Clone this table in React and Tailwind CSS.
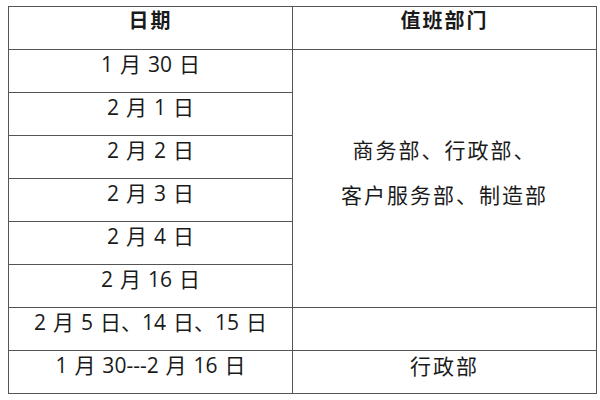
export default function App() {
  const sans = { fontFamily: '"Open Sans", "Noto Sans CJK SC", sans-serif' }
  const rows = ['1 月 30 日', '2 月 1 日', '2 月 2 日', '2 月 3 日', '2 月 4 日', '2 月 16 日']

  return (
    <div className="w-[600px] h-[400px] bg-white pt-[6px] pl-[8px] text-[#1a1a1a]">
      <table className="table-fixed border-collapse w-[588px]" style={sans}>
        <colgroup>
          <col className="w-[284px]" />
          <col className="w-[304px]" />
        </colgroup>
        <tbody>
          <tr className="h-[43px]">
            <td className="border border-[#555] align-top pt-[2px] text-center text-[20px] leading-[24px] font-bold tracking-[2px]">日期</td>
            <td className="border border-[#555] align-top pt-[2px] text-center text-[20px] leading-[24px] font-bold tracking-[2px]">值班部门</td>
          </tr>
          {rows.map((r, i) => (
            <tr key={r} className="h-[43px]">
              <td className="border border-[#555] align-top pt-[2px] text-center text-[21px] leading-[24px] [word-spacing:1.5px]">{r}</td>
              {i === 0 && (
                <td rowSpan={6} className="border border-[#555] align-top pt-[77px] text-center text-[21px] leading-[45px] tracking-[2px]" style={{ fontFamily: '"Noto Sans CJK SC", sans-serif' }}>
                  <div>商务部、行政部、</div>
                  <div>客户服务部、制造部</div>
                </td>
              )}
            </tr>
          ))}
          <tr className="h-[43px]">
            <td className="border border-[#555] align-top pt-[2px] text-center text-[21px] leading-[24px] [word-spacing:1.5px]">2 月 5 日、14 日、15 日</td>
            <td className="border border-[#555]"></td>
          </tr>
          <tr className="h-[43px]">
            <td className="border border-[#555] align-top pt-[2px] text-center text-[21px] leading-[24px] [word-spacing:1.5px]">1 月 30---2 月 16 日</td>
            <td className="border border-[#555] align-top pt-[2px] text-center text-[21px] leading-[24px] tracking-[2px]" style={{ fontFamily: '"Noto Sans CJK SC", sans-serif' }}>行政部</td>
          </tr>
        </tbody>
      </table>
    </div>
  )
}
